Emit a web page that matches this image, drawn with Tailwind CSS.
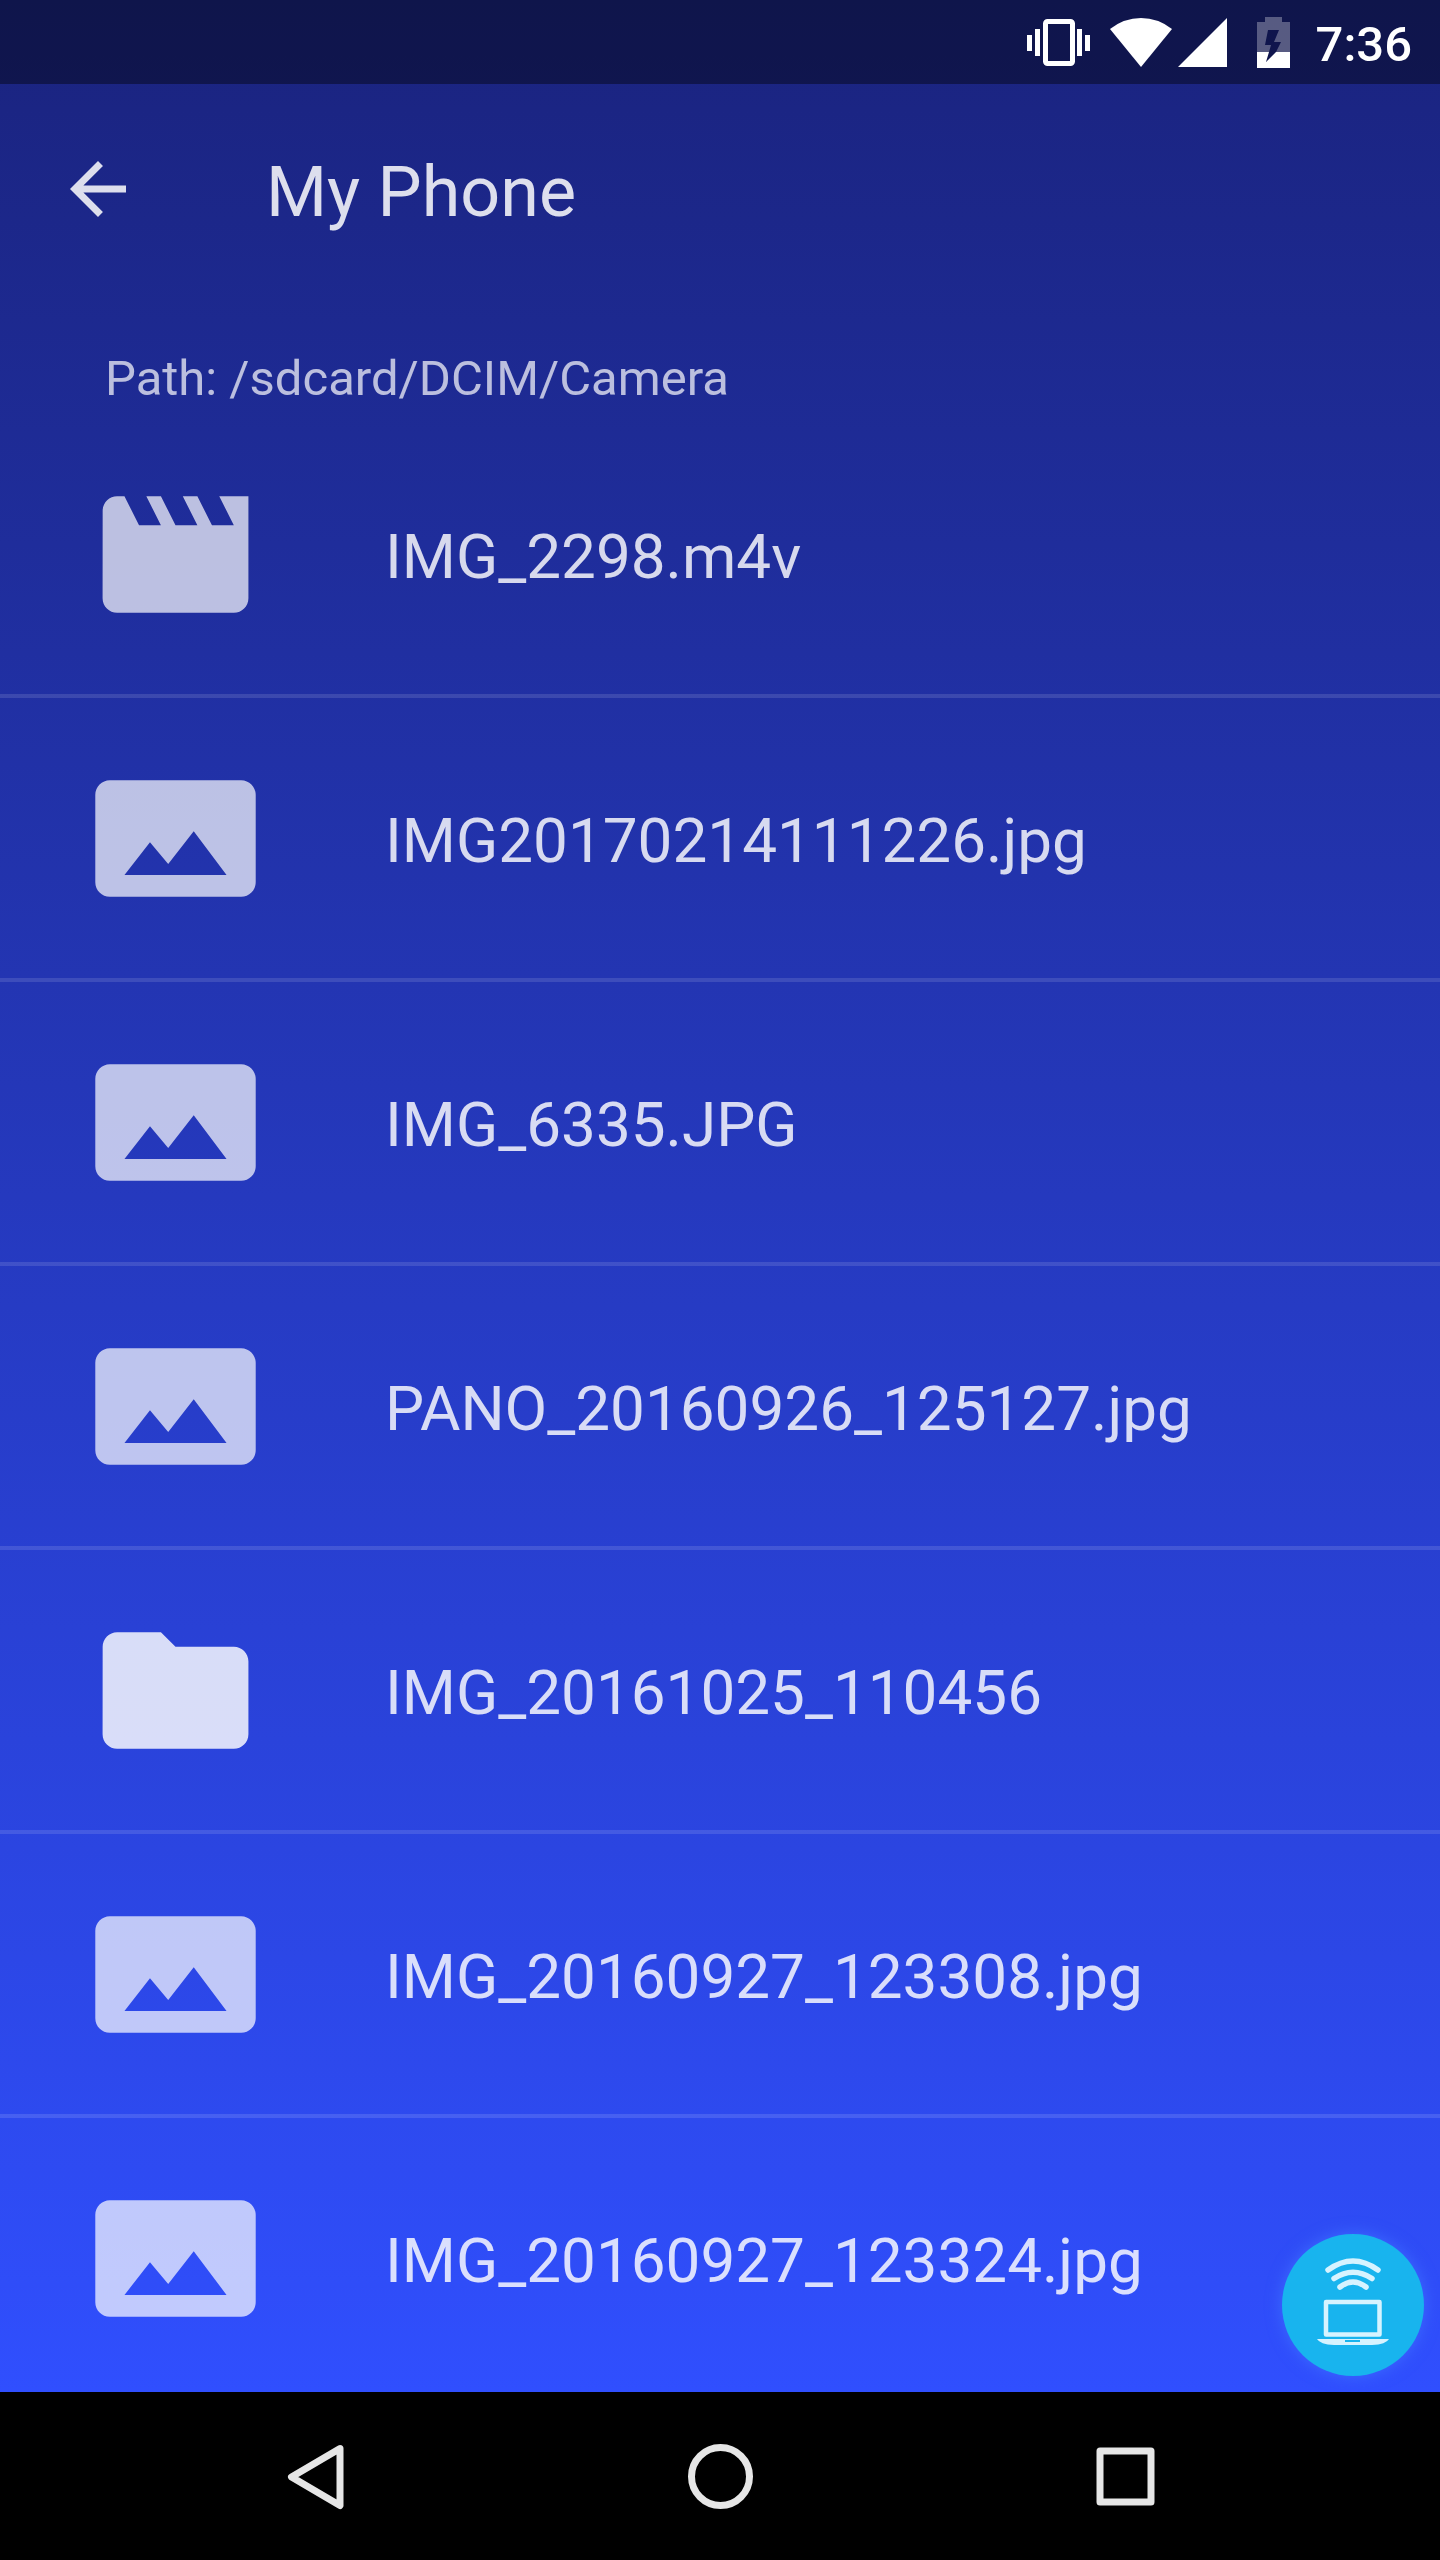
<!DOCTYPE html>
<html lang="en">
<head>
    <meta charset="UTF-8">
    <meta name="viewport" content="width=device-width, initial-scale=1.0">
    <title>My Phone</title>
    <script src="https://cdn.jsdelivr.net/npm/@tailwindcss/browser@4"></script>
</head>
<body class="bg-black font-[Roboto,sans-serif]">
    <!-- Shared file type icons -->
    <svg class="hidden" xmlns="http://www.w3.org/2000/svg">
        <symbol id="icon-movie" viewBox="0 0 24 24">
            <path d="M18 4l2 4h-3l-2-4h-2l2 4h-3l-2-4H8l2 4H7L5 4H4c-1.1 0-1.99.9-1.99 2L2 18c0 1.1.9 2 2 2h16c1.1 0 2-.9 2-2V4h-4z"/>
        </symbol>
        <symbol id="icon-image" viewBox="0 0 24 24">
            <path d="M23 18V6c0-1.1-.9-2-2-2H3c-1.1 0-2 .9-2 2v12c0 1.1.9 2 2 2h18c1.1 0 2-.9 2-2zM8.5 12.5l2.5 3.01L14.5 11l4.5 6H5l3.5-4.5z"/>
        </symbol>
        <symbol id="icon-folder" viewBox="0 0 24 24">
            <path d="M10 4H4c-1.1 0-1.99.9-1.99 2L2 18c0 1.1.9 2 2 2h16c1.1 0 2-.9 2-2V8c0-1.1-.9-2-2-2h-8l-2-2z"/>
        </symbol>
    </svg>

    <div class="min-h-screen flex flex-col">
        <div class="relative flex-1 flex flex-col bg-linear-to-b/srgb from-[#1a237e] to-[#304ffe]">
            <!-- Status Bar -->
            <div class="h-[84px] shrink-0 bg-black/40 flex items-center justify-end pr-7 text-white">
                <svg class="w-16 h-12" viewBox="0 0 64 48" fill="currentColor">
                    <rect x="18.5" y="3.5" width="27" height="42" rx="2" fill="none" stroke="currentColor" stroke-width="5"/>
                    <rect x="0" y="17" width="5" height="16"/>
                    <rect x="8" y="11" width="5" height="27"/>
                    <rect x="50" y="11" width="5" height="27"/>
                    <rect x="58" y="17" width="5" height="16"/>
                </svg>
                <svg class="w-[62px] h-[49px] ml-[19px]" viewBox="0 0 62 49" fill="currentColor">
                    <path d="M31 49 0 11Q14 0 31 0T62 11Z"/>
                </svg>
                <svg class="w-[49px] h-[49px] ml-[6px]" viewBox="0 0 49 49" fill="currentColor">
                    <path d="M0 49H49V0Z"/>
                </svg>
                <svg class="w-[33px] h-[51px] ml-[30px]" viewBox="0 0 33 51" fill="currentColor">
                    <path fill-opacity=".3" d="M8 0H25V5H33V35H19L24 25H17L22 13H11L8 28H14L12 35H0V5H8Z"/>
                    <path d="M0 35H12L9 45 19 35H33V51H0Z"/>
                </svg>
                <time class="ml-[26px] pt-[6px] text-[49px] leading-[56px] font-medium">7:36</time>
            </div>

            <!-- App Bar -->
            <header class="h-[210px] shrink-0 flex items-center px-14">
                <button aria-label="Back" class="text-white/85">
                    <svg class="w-[84px] h-[84px]" viewBox="0 0 24 24" fill="currentColor">
                        <path d="M20 11H7.83l5.59-5.59L12 4l-8 8 8 8 1.41-1.41L7.83 13H20v-2z"/>
                    </svg>
                </button>
                <h1 class="ml-[126px] pt-[6px] text-[70px] leading-[84px] text-white/85">My Phone</h1>
            </header>

            <main>
                <p class="h-[120px] pt-[57px] px-[105px] text-[49px] leading-[56px] text-white/70">Path: /sdcard/DCIM/Camera</p>
                <ul class="divide-y-4 divide-white/12">
                    <li>
                        <a href="#" class="h-[280px] flex items-center pl-[88px]">
                            <svg class="w-[175px] h-[175px] shrink-0 fill-white/70"><use href="#icon-movie"/></svg>
                            <span class="ml-[122px] pt-[6px] text-[62px] leading-[72px] text-white/82">IMG_2298.m4v</span>
                        </a>
                    </li>
                    <li>
                        <a href="#" class="h-[280px] flex items-center pl-[88px]">
                            <svg class="w-[175px] h-[175px] shrink-0 fill-white/70"><use href="#icon-image"/></svg>
                            <span class="ml-[122px] pt-[6px] text-[62px] leading-[72px] text-white/82">IMG20170214111226.jpg</span>
                        </a>
                    </li>
                    <li>
                        <a href="#" class="h-[280px] flex items-center pl-[88px]">
                            <svg class="w-[175px] h-[175px] shrink-0 fill-white/70"><use href="#icon-image"/></svg>
                            <span class="ml-[122px] pt-[6px] text-[62px] leading-[72px] text-white/82">IMG_6335.JPG</span>
                        </a>
                    </li>
                    <li>
                        <a href="#" class="h-[280px] flex items-center pl-[88px]">
                            <svg class="w-[175px] h-[175px] shrink-0 fill-white/70"><use href="#icon-image"/></svg>
                            <span class="ml-[122px] pt-[6px] text-[62px] leading-[72px] text-white/82">PANO_20160926_125127.jpg</span>
                        </a>
                    </li>
                    <li>
                        <a href="#" class="h-[280px] flex items-center pl-[88px]">
                            <svg class="w-[175px] h-[175px] shrink-0 fill-white/82"><use href="#icon-folder"/></svg>
                            <span class="ml-[122px] pt-[6px] text-[62px] leading-[72px] text-white/82">IMG_20161025_110456</span>
                        </a>
                    </li>
                    <li>
                        <a href="#" class="h-[280px] flex items-center pl-[88px]">
                            <svg class="w-[175px] h-[175px] shrink-0 fill-white/70"><use href="#icon-image"/></svg>
                            <span class="ml-[122px] pt-[6px] text-[62px] leading-[72px] text-white/82">IMG_20160927_123308.jpg</span>
                        </a>
                    </li>
                    <li>
                        <a href="#" class="h-[274px] flex items-center pl-[88px] pt-[6px]">
                            <svg class="w-[175px] h-[175px] shrink-0 fill-white/70"><use href="#icon-image"/></svg>
                            <span class="ml-[122px] pt-[6px] text-[62px] leading-[72px] text-white/82">IMG_20160927_123324.jpg</span>
                        </a>
                    </li>
                </ul>
            </main>

            <!-- Cast to computer -->
            <button aria-label="Connect to computer" class="absolute right-4 bottom-4 rounded-full bg-[#18b4ee] shadow-[0_0_16px_#3d6bff]">
                <svg class="w-[142px] h-[142px]" viewBox="0 0 142 142" fill="none" stroke="#d6f3ff" stroke-linecap="round" stroke-linejoin="round">
                    <path stroke-width="5.5" d="M46 36Q71 18 96 36M52 44.500Q71 32 90 44.500M58 53Q71 43 84 53"/>
                    <rect x="44" y="68" width="53.500" height="32.500" stroke-width="4.500"/>
                    <path fill="#d6f3ff" stroke="none" d="M35 105H107Q104 110.500 90 111H52Q38 110.500 35 105Z"/>
                    <path stroke="#18b4ee" stroke-width="2" stroke-linecap="butt" d="M63 107H78"/>
                </svg>
            </button>
        </div>

        <!-- Navigation Bar -->
        <nav class="h-[168px] shrink-0 bg-black flex items-center justify-center gap-[321px] text-[#e6e6e6]">
            <button aria-label="Back">
                <svg class="w-[84px] h-[84px]" viewBox="0 0 84 84" fill="none" stroke="currentColor" stroke-width="7" stroke-linejoin="round">
                    <path d="M67 14.500 18.500 43 67 71.500Z"/>
                </svg>
            </button>
            <button aria-label="Home">
                <svg class="w-[84px] h-[84px]" viewBox="0 0 84 84" fill="none" stroke="currentColor" stroke-width="7">
                    <circle cx="42.500" cy="42.500" r="29"/>
                </svg>
            </button>
            <button aria-label="Recent apps">
                <svg class="w-[84px] h-[84px]" viewBox="0 0 84 84" fill="none" stroke="currentColor" stroke-width="7" stroke-linejoin="round">
                    <rect x="17" y="17" width="51" height="51"/>
                </svg>
            </button>
        </nav>
    </div>
</body>
</html>
